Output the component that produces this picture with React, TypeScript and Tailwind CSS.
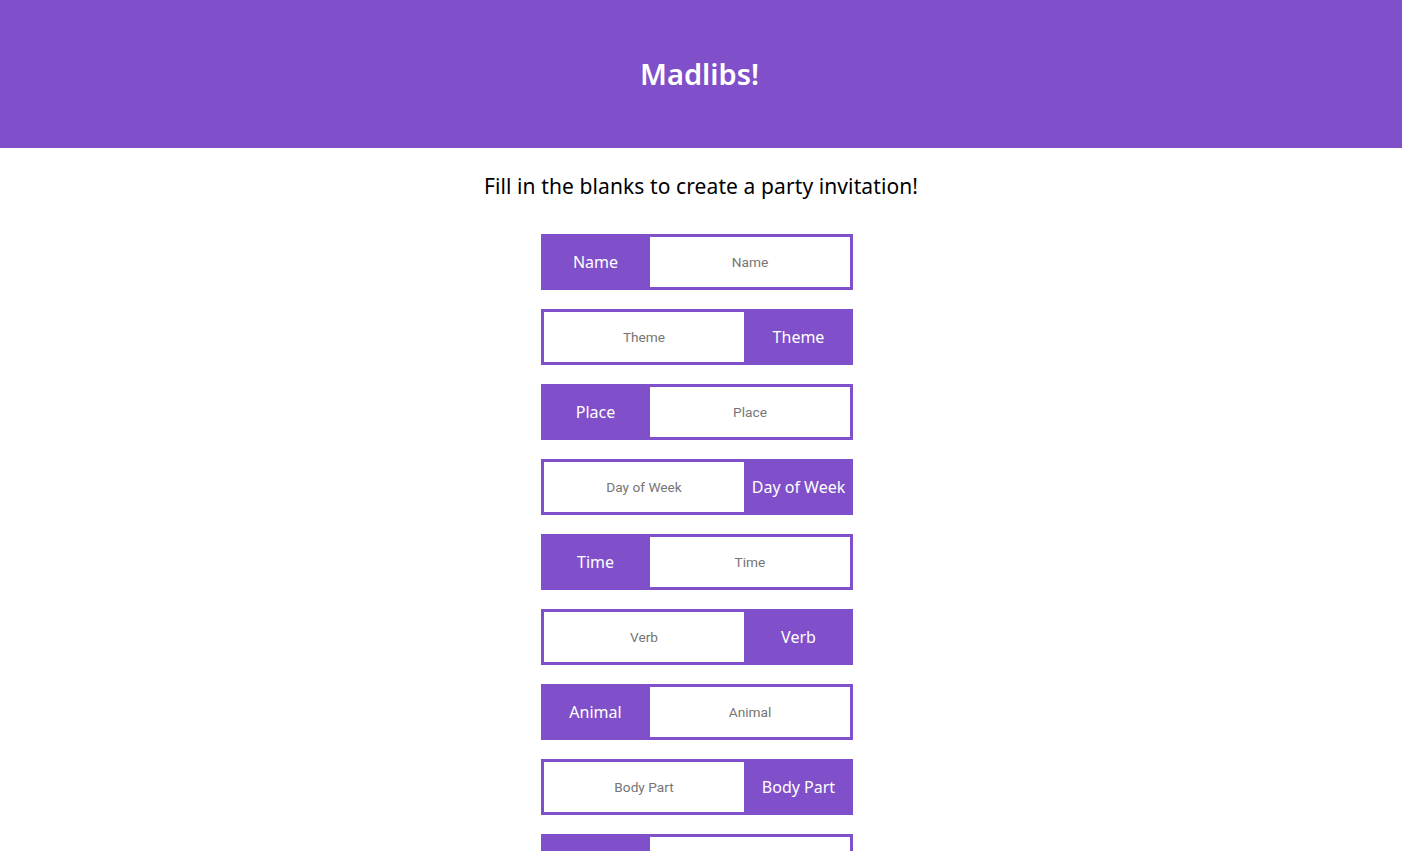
const fields = [
  'Name',
  'Theme',
  'Place',
  'Day of Week',
  'Time',
  'Verb',
  'Animal',
  'Body Part',
  'Food',
  'Adjective',
]

function Field({ label, index }: { label: string; index: number }) {
  const labelFirst = index % 2 === 0
  const labelBox = (
    <div className="w-[109px] h-full bg-[#7f50c9] text-white text-[16px] flex items-center justify-center">
      {label}
    </div>
  )
  return (
    <div className="flex h-[56px] w-[312px]">
      {labelFirst && labelBox}
      <input
        type="text"
        placeholder={label}
        className={`flex-1 h-full min-w-0 bg-white border-[#7f50c9] border-y-[3px] text-center text-[13.7px] text-[#333] placeholder:text-[#757575] outline-none font-['Roboto',sans-serif] ${
          labelFirst ? 'border-r-[3px]' : 'border-l-[3px]'
        }`}
      />
      {!labelFirst && labelBox}
    </div>
  )
}

export default function App() {
  return (
    <div className="min-h-screen bg-white font-['Noto_Sans',sans-serif]">
      <header className="h-[148px] bg-[#7f50c9] flex items-center justify-center pr-[3px]">
        <h1 className="text-white text-[29px] font-semibold">Madlibs!</h1>
      </header>
      <p className="text-center text-[21px] tracking-[0.1px] text-black mt-[23px]">
        Fill in the blanks to create a party invitation!
      </p>
      <form className="flex flex-col items-center gap-[19px] mt-[31px] pb-10 pr-[8px]">
        {fields.map((f, i) => (
          <Field key={f} label={f} index={i} />
        ))}
      </form>
    </div>
  )
}
